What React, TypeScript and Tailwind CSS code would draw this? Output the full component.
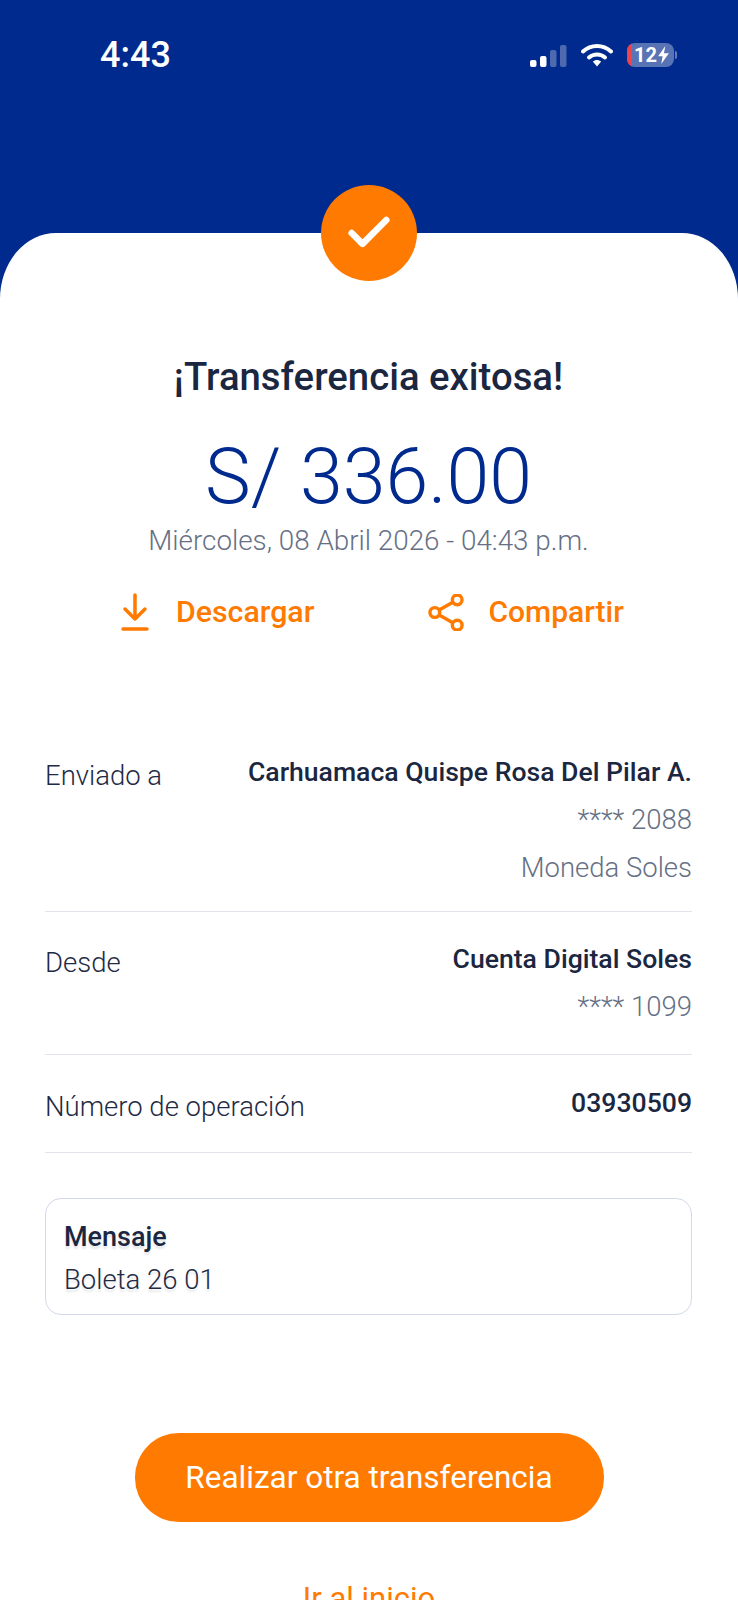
import { Check } from "lucide-react";

const sans = "font-['Roboto',sans-serif]";

function StatusIcons() {
  return (
    <div className="flex items-center gap-[14px]">
      <svg width="37" height="23" viewBox="0 0 37 23" aria-hidden="true">
        <rect x="0" y="16" width="6.5" height="7" rx="2" fill="#fff" />
        <rect x="10" y="12" width="6.5" height="11" rx="2" fill="#fff" />
        <rect x="20" y="6" width="6.5" height="17" rx="2" fill="#fff" fillOpacity="0.3" />
        <rect x="30" y="1" width="6.5" height="22" rx="2" fill="#fff" fillOpacity="0.3" />
      </svg>
      <svg width="32" height="24" viewBox="0 0 32 24" aria-hidden="true">
        <path d="M2 8.5C10 1 22 1 30 8.5" fill="none" stroke="#fff" strokeWidth="4" strokeLinecap="round" />
        <path d="M8 14.5C12.5 10.5 19.5 10.5 24 14.5" fill="none" stroke="#fff" strokeWidth="4" strokeLinecap="round" />
        <path d="M11.8 18.6C14.4 16.4 17.6 16.4 20.2 18.6L16 23.5Z" fill="#fff" />
      </svg>
      <div className="flex items-center">
        <div className="relative flex h-[24px] w-[47px] items-center overflow-hidden rounded-[8px] bg-white/35 pl-[7px]">
          <div className="absolute inset-y-0 left-0 w-[5px] bg-[#f0424a]" />
          <span className={`relative text-[20px] leading-none font-bold text-white ${sans}`}>12</span>
          <svg width="11" height="18" viewBox="0 0 12 20" className="relative ml-[1px]" aria-hidden="true">
            <path d="M8 0L0 11.5H5L3.5 20L12 8H6.5Z" fill="#fff" />
          </svg>
        </div>
        <div className="ml-[1px] h-[8px] w-[2px] rounded-r-full bg-white/40" />
      </div>
    </div>
  );
}

function Row({ label, value, sub, className }: { label: string; value: string; sub?: string[]; className: string }) {
  return (
    <div className={`flex justify-between border-b border-[#e1e4ea] ${className}`}>
      <span className={`mt-[3px] text-[27.5px] leading-[34px] font-light text-[#1f2a44] ${sans}`}>{label}</span>
      <div className="-mt-[1px] flex flex-col items-end gap-[14px]">
        <span className={`text-[26.6px] leading-[34px] font-medium text-[#1b2740] ${sans}`}>{value}</span>
        {sub?.map((line) => (
          <span key={line} className={`text-[27.5px] leading-[34px] font-light text-[#667085] ${sans}`}>
            {line}
          </span>
        ))}
      </div>
    </div>
  );
}

export default function App() {
  return (
    <div className="h-[1600px] w-[738px] overflow-hidden bg-[#002a8d]">
      {/* Status bar */}
      <div className="flex h-[233px] items-start justify-between pt-[37px] pr-[61px] pl-[100px]">
        <span className={`text-[36px] leading-[36px] font-medium text-white ${sans}`}>4:43</span>
        <div className="mt-[6px]">
          <StatusIcons />
        </div>
      </div>

      {/* Card */}
      <div className="relative h-[1367px] rounded-tl-[56px_66px] rounded-tr-[56px_66px] bg-white pt-[122px] pr-[46px] pl-[45px]">
        <div className="absolute top-[-48px] left-[321px] flex h-[96px] w-[96px] items-center justify-center rounded-full bg-[#ff7a00]">
          <Check className="h-[52px] w-[52px] text-white" strokeWidth={3} />
        </div>

        <h1 className={`text-center text-[38.3px] leading-[44px] font-medium text-[#1b2740] ${sans}`}>
          ¡Transferencia exitosa!
        </h1>
        <p className={`mt-[40px] text-center text-[77px] leading-[76px] font-light text-[#002a8d] ${sans}`}>S/ 336.00</p>
        <p className={`mt-[9px] text-center text-[27.8px] leading-[34px] font-light text-[#667085] ${sans}`}>
          Miércoles, 08 Abril 2026 - 04:43 p.m.
        </p>

        {/* Actions */}
        <div className="mt-[34px] flex h-[40px] items-center pl-[75px]">
          <svg width="30" height="38" viewBox="0 0 30 38" fill="none" stroke="#ff7a00" strokeWidth="3.5" strokeLinecap="round" strokeLinejoin="round" aria-hidden="true">
            <path d="M15 2V26M5 16L15 26L25 16M3 36H27" />
          </svg>
          <span className={`ml-[26px] text-[30.3px] leading-[36px] font-medium text-[#ff7a00] ${sans}`}>Descargar</span>
          <svg width="37" height="37" viewBox="0 0 38 38" fill="none" stroke="#ff7a00" strokeWidth="3.5" className="ml-[114px]" aria-hidden="true">
            <circle cx="7" cy="19" r="5" />
            <circle cx="30" cy="6" r="5" />
            <circle cx="30" cy="32" r="5" />
            <path d="M11.5 16.5L25.5 8.5M11.5 21.5L25.5 29.5" />
          </svg>
          <span className={`ml-[23px] text-[30px] leading-[36px] font-medium text-[#ff7a00] ${sans}`}>Compartir</span>
        </div>

        {/* Details */}
        <div className="mt-[124px]">
          <Row label="Enviado a" value="Carhuamaca Quispe Rosa Del Pilar A." sub={["**** 2088", "Moneda Soles"]} className="h-[156px]" />
          <Row label="Desde" value="Cuenta Digital Soles" sub={["**** 1099"]} className="mt-[31px] h-[112px]" />
          <Row label="Número de operación" value="03930509" className="mt-[32px] h-[66px]" />
        </div>

        {/* Message */}
        <div className="mt-[45px] h-[117px] rounded-[16px] border border-[#d3d9e8] px-[18px] pt-[21px]">
          <p className={`text-[27px] leading-[34px] font-medium text-[#1b2740] [text-shadow:0_3px_2px_rgba(120,130,150,0.18)] ${sans}`}>Mensaje</p>
          <p className={`mt-[9px] text-[27.5px] leading-[34px] font-light text-[#1f2a44] [text-shadow:0_3px_2px_rgba(120,130,150,0.18)] ${sans}`}>Boleta 26 01</p>
        </div>

        {/* Buttons */}
        <div className="mt-[118px] flex flex-col items-center pl-[1px]">
          <button className={`h-[89px] w-[469px] rounded-[44px] bg-[#ff7a00] text-[31.5px] font-normal text-white ${sans}`}>
            Realizar otra transferencia
          </button>
          <a className={`mt-[57px] text-[31px] leading-[40px] font-normal text-[#ff7a00] ${sans}`}>Ir al inicio</a>
        </div>
      </div>
    </div>
  );
}
